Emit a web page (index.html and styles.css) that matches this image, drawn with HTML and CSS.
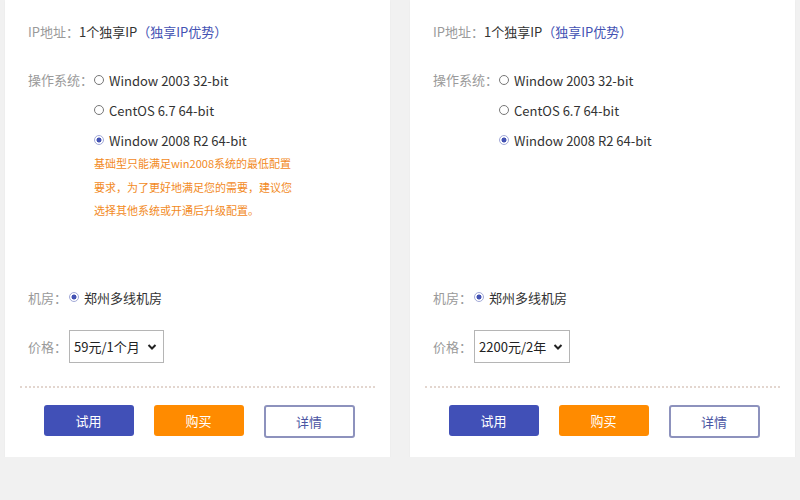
FILE: index.html
```html
<!DOCTYPE html>
<html lang="zh-CN">
<head>
    <meta charset="UTF-8">
    <title>云主机套餐</title>
    <link rel="stylesheet" href="styles.css">
</head>
<body>
    <div class="plans">
        <div class="plan">
            <div class="row ip-row">
                <span class="label">IP地址：</span>
                <span class="value">1个独享IP</span>
                <a class="link" href="#">（独享IP优势）</a>
            </div>

            <div class="os-block">
                <div class="os-list">
                    <span class="label os-label">操作系统：</span>
                    <div class="options">
                        <div class="option"><span class="radio"></span>Window 2003 32-bit</div>
                        <div class="option"><span class="radio"></span>CentOS 6.7 64-bit</div>
                        <div class="option"><span class="radio checked"></span>Window 2008 R2 64-bit</div>
                        <div class="note">
                            基础型只能满足win2008系统的最低配置<br>
                            要求，为了更好地满足您的需要，建议您<br>
                            选择其他系统或开通后升级配置。
                        </div>
                    </div>
                </div>
            </div>

            <div class="row room-row">
                <span class="label">机房：</span>
                <span class="radio checked"></span>
                <span class="value">郑州多线机房</span>
            </div>

            <div class="row price-row">
                <span class="label">价格：</span>
                <div class="select">
                    <span>59元/1个月</span>
                    <svg width="10" height="8" viewBox="0 0 10 8"><path d="M1.5 2 L5 5.5 L8.5 2" fill="none" stroke="#222" stroke-width="2"/></svg>
                </div>
            </div>

            <div class="divider"></div>

            <div class="actions">
                <button class="btn btn-trial">试用</button>
                <button class="btn btn-buy">购买</button>
                <button class="btn btn-detail">详情</button>
            </div>
        </div>

        <div class="plan">
            <div class="row ip-row">
                <span class="label">IP地址：</span>
                <span class="value">1个独享IP</span>
                <a class="link" href="#">（独享IP优势）</a>
            </div>

            <div class="os-block">
                <div class="os-list">
                    <span class="label os-label">操作系统：</span>
                    <div class="options">
                        <div class="option"><span class="radio"></span>Window 2003 32-bit</div>
                        <div class="option"><span class="radio"></span>CentOS 6.7 64-bit</div>
                        <div class="option"><span class="radio checked"></span>Window 2008 R2 64-bit</div>
                    </div>
                </div>
            </div>

            <div class="row room-row">
                <span class="label">机房：</span>
                <span class="radio checked"></span>
                <span class="value">郑州多线机房</span>
            </div>

            <div class="row price-row">
                <span class="label">价格：</span>
                <div class="select">
                    <span>2200元/2年</span>
                    <svg width="10" height="8" viewBox="0 0 10 8"><path d="M1.5 2 L5 5.5 L8.5 2" fill="none" stroke="#222" stroke-width="2"/></svg>
                </div>
            </div>

            <div class="divider"></div>

            <div class="actions">
                <button class="btn btn-trial">试用</button>
                <button class="btn btn-buy">购买</button>
                <button class="btn btn-detail">详情</button>
            </div>
        </div>
    </div>
</body>
</html>
```

FILE: styles.css
```css
body {
    margin: 0;
    padding: 0;
    background: #f1f1f1;
    color: #333;
    font-family: "Microsoft YaHei", "Noto Sans CJK SC", sans-serif;
    font-size: 13px;
    overflow: hidden;
}

.plans {
    display: flex;
    gap: 20px;
    padding: 0 5px;
}

.plan {
    width: 385px;
    height: 457px;
    box-sizing: border-box;
    background: #fff;
    padding: 21px 0 0 0;
    box-shadow: 0 1px 2px rgba(0, 0, 0, 0.04);
}

.row {
    display: flex;
    align-items: center;
    padding: 0 23px;
    white-space: nowrap;
}

.label {
    color: #9a9a9a;
    white-space: nowrap;
    flex-shrink: 0;
}

.value {
    color: #333;
}

.link {
    color: #4352b3;
    text-decoration: none;
}

.ip-row {
    height: 20px;
}

.os-block {
    height: 217px;
    margin-top: 24px;
    padding: 0 23px;
}

.os-list {
    display: flex;
}

.os-label {
    line-height: 30px;
    margin-right: 1px;
}

.option {
    display: flex;
    align-items: center;
    height: 30px;
    color: #333;
    white-space: nowrap;
}

.radio {
    display: inline-block;
    box-sizing: border-box;
    width: 10px;
    height: 10px;
    border: 1px solid #777;
    border-radius: 50%;
    margin-right: 5px;
    flex-shrink: 0;
}

.radio.checked {
    border: 1px solid #a3aad8;
    background: radial-gradient(circle, #4352b3 0 2.2px, #fff 2.8px);
}

.note {
    margin-top: -3px;
    color: #f28a1e;
    font-size: 11px;
    line-height: 23.5px;
    white-space: nowrap;
}

.room-row {
    height: 30px;
}

.room-row .radio {
    margin-left: 2px;
}

.price-row {
    margin-top: 18px;
}

.select {
    display: flex;
    align-items: center;
    gap: 7px;
    box-sizing: border-box;
    min-width: 80px;
    height: 33px;
    padding: 0 6px 0 4px;
    margin-left: 2px;
    border: 1px solid #b5b5b5;
    color: #222;
    font-size: 13px;
}

.divider {
    margin: 23px 15px 0;
    border-top: 2px dotted #e3d6cf;
}

.actions {
    display: flex;
    justify-content: center;
    gap: 20px;
    margin-top: 17px;
    padding-left: 3px;
}

.btn {
    width: 90px;
    height: 31px;
    border: none;
    border-radius: 3px;
    font-family: inherit;
    font-size: 13px;
    color: #fff;
    cursor: pointer;
}

.btn-trial {
    background: #4150b7;
}

.btn-buy {
    background: #ff8b00;
}

.btn-detail {
    width: 91px;
    height: 33px;
    background: #fff;
    border: 2px solid #8d92bd;
    color: #4a55a3;
}
```
